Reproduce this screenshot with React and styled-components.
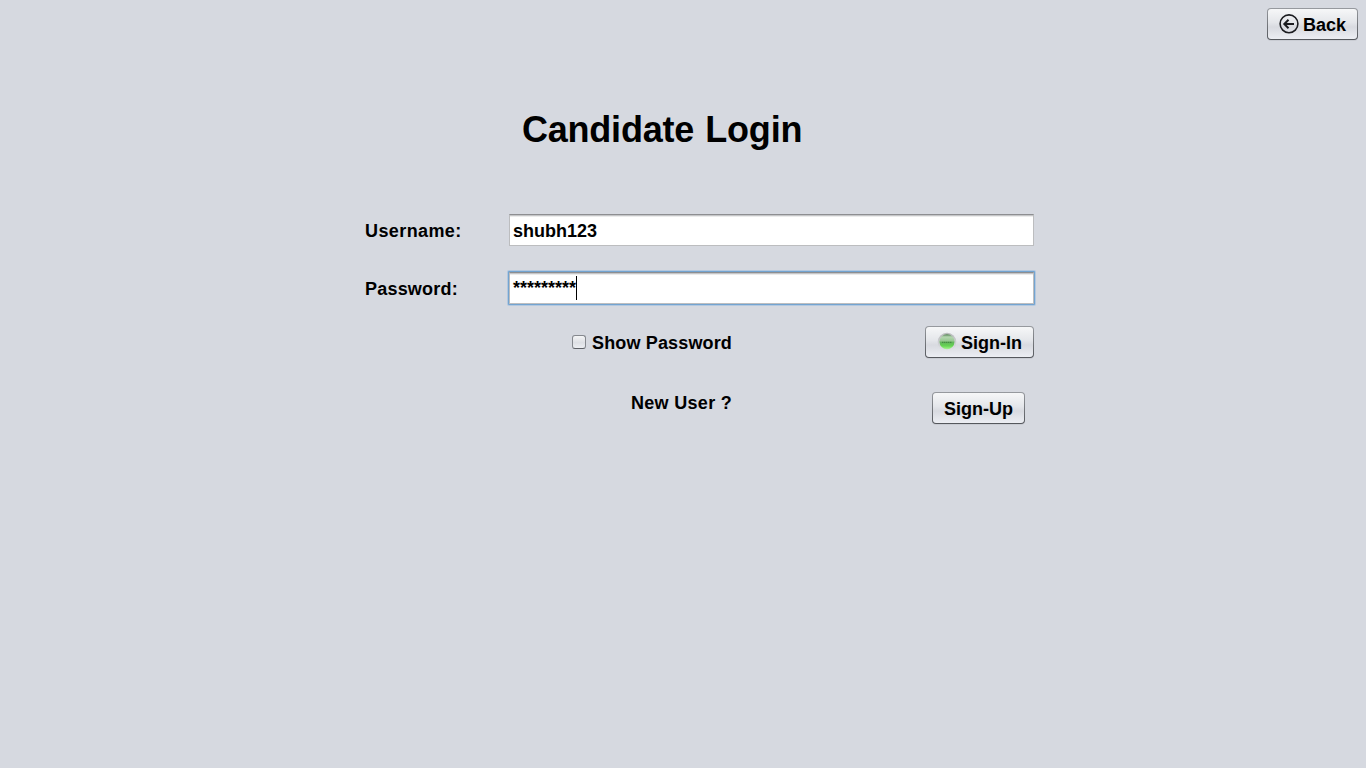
import React from "react";
import styled, { createGlobalStyle } from "styled-components";

const GlobalStyle = createGlobalStyle`
  *, *::before, *::after { box-sizing: border-box; }
  body { margin: 0; background: #d6d9e0; }
`;

const Page = styled.main`
  height: 768px;
  overflow: hidden;
  background: #d6d9e0;
  color: #000;
  font: bold 18px/20px "Liberation Sans", Arial, sans-serif;
`;

const TopBar = styled.header`
  display: flex;
  justify-content: flex-end;
  padding: 8px 8px 0;
`;

const Title = styled.h1`
  margin: 69px 0 0 522px;
  font-size: 36px;
  line-height: 42px;
  letter-spacing: -0.22px;
  word-spacing: 1.5px;
  white-space: nowrap;
`;

const Form = styled.form`
  width: 670px;
  margin: 62px 0 0 365px;
`;

const FieldRow = styled.div`
  display: flex;
  align-items: center;
  height: 34px;
  margin-bottom: 24px;
`;

const Label = styled.label`
  flex: none;
  width: 143px;
  padding-top: 2px;
  letter-spacing: ${(p) => p.$tracking}px;
`;

const Field = styled.div`
  display: flex;
  align-items: center;
  width: 527px;
  height: 34px;
  padding: 1px;
  border-radius: 1px;
  background: ${(p) => (p.$focused ? "#73a4d1" : "transparent")};
  box-shadow: ${(p) => (p.$focused ? "0 0 0 1px #b3c8df" : "none")};
`;

const FieldInner = styled.div`
  display: flex;
  align-items: center;
  flex: 1;
  height: 32px;
  padding-left: 3px;
  border: 1px solid #bcbdbf;
  border-top-color: #8d8e91;
  background: linear-gradient(#c5c6c8 0 1px, #ececec 1px 2px, #fff 2px);
`;

const Value = styled.span`
  padding-top: 2px;
`;

const Mask = styled.span`
  padding-top: 0;
`;

const Caret = styled.span`
  width: 1px;
  height: 24px;
  background: #000;
`;

const Actions = styled.div`
  margin-top: -3px;
`;

const ActionRow = styled.div`
  display: flex;
  align-items: flex-start;
  justify-content: space-between;
  height: ${(p) => p.$height}px;
  padding: 0 ${(p) => p.$right}px 0 ${(p) => p.$left}px;
`;

const CheckLabel = styled.label`
  display: flex;
  align-items: center;
  gap: 6px;
  height: 32px;
  letter-spacing: 0.15px;
`;

const CheckText = styled.span`
  padding-top: 2px;
`;

const CheckBox = styled.span`
  width: 14px;
  height: 14px;
  border: 1px solid #85888e;
  border-bottom-color: #5d6066;
  border-radius: 3px;
  background: linear-gradient(#f4f5f6, #dddfe4 55%, #eceef2);
`;

const Prompt = styled.span`
  padding-top: 1px;
  letter-spacing: 0.3px;
`;

const Button = styled.button`
  display: flex;
  align-items: center;
  justify-content: center;
  gap: 4px;
  width: ${(p) => p.$width}px;
  height: 32px;
  padding: 1px 0 0;
  border: 1px solid transparent;
  border-radius: 4px;
  background:
    linear-gradient(#f6f7f8, #e4e6ea 45%, #d8dae0 60%, #eceef3) padding-box,
    linear-gradient(#979a9f, #54575c) border-box;
  box-shadow: 0 1px 0 #c9ccd3;
  color: inherit;
  font: inherit;
  white-space: nowrap;

  svg { display: block; flex: none; margin-top: -2px; }
`;

function BackIcon() {
  return (
    <svg width="20" height="20" viewBox="0 0 20 20" fill="none" stroke="#1b1c20">
      <circle cx="10" cy="9.8" r="8.9" strokeWidth="1.6" />
      <path d="M5.5 10H15M9.5 5.8 5.3 10 9.5 14.2" strokeWidth="2" />
    </svg>
  );
}

function LoginIcon() {
  return (
    <svg width="20" height="20" viewBox="0 0 20 20">
      <defs>
        <linearGradient id="rim" x2="0" y2="1">
          <stop stopColor="#a5a7a8" />
          <stop offset="1" stopColor="#e4e6e9" />
        </linearGradient>
        <linearGradient id="orb" x2="0" y2="1">
          <stop stopColor="#4c7c4b" />
          <stop offset=".18" stopColor="#b4d6b0" />
          <stop offset=".44" stopColor="#98c892" />
          <stop offset=".55" stopColor="#62b65a" />
          <stop offset=".78" stopColor="#65d552" />
          <stop offset="1" stopColor="#a7f491" />
        </linearGradient>
      </defs>
      <circle cx="10" cy="10" r="9.3" fill="url(#rim)" opacity=".75" />
      <circle cx="10" cy="9.7" r="7.5" fill="url(#orb)" />
      <path d="M5 10.3H15" stroke="#28612a" strokeWidth="1.2" strokeDasharray="1.4 .6" opacity=".5" />
    </svg>
  );
}

export default function App() {
  return (
    <Page>
      <GlobalStyle />
      <TopBar>
        <Button type="button" $width={91}><BackIcon />Back</Button>
      </TopBar>
      <Title>Candidate Login</Title>
      <Form>
        <FieldRow>
          <Label $tracking={0.4}>Username:</Label>
          <Field><FieldInner><Value>shubh123</Value></FieldInner></Field>
        </FieldRow>
        <FieldRow>
          <Label $tracking={0.2}>Password:</Label>
          <Field $focused><FieldInner><Mask>*********</Mask><Caret /></FieldInner></Field>
        </FieldRow>
        <Actions>
          <ActionRow $height={66} $left={207} $right={1}>
            <CheckLabel><CheckBox /><CheckText>Show Password</CheckText></CheckLabel>
            <Button type="button" $width={109}><LoginIcon />Sign-In</Button>
          </ActionRow>
          <ActionRow $height={32} $left={266} $right={10}>
            <Prompt>New User ?</Prompt>
            <Button type="button" $width={93}>Sign-Up</Button>
          </ActionRow>
        </Actions>
      </Form>
    </Page>
  );
}
